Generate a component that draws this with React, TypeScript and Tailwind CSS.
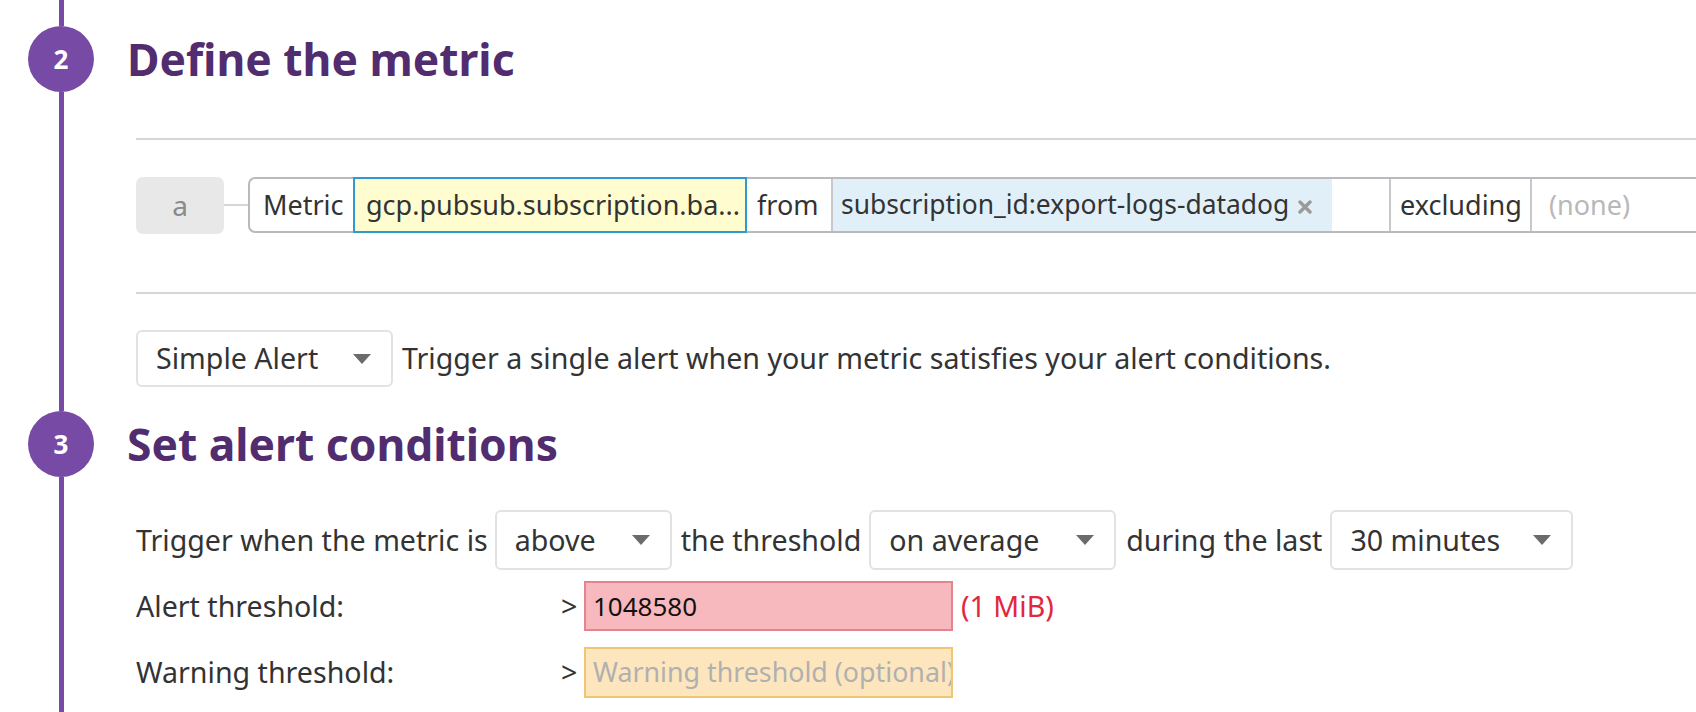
import React from "react";

const Caret = () => (
  <svg width="18" height="10" viewBox="0 0 18 10" className="shrink-0">
    <path d="M0 0 L18 0 L9 10 Z" fill="#6b6b6b" />
  </svg>
);

const Cross = () => (
  <svg width="14" height="14" viewBox="0 0 14 14" className="ml-[9px] mt-[4px] shrink-0">
    <path d="M2 2 L12 12 M12 2 L2 12" stroke="#9a9a9a" strokeWidth="3.4" strokeLinecap="round" />
  </svg>
);

function Select({ label, width }: { label: string; width: string }) {
  return (
    <div
      className={`flex h-full shrink-0 items-center justify-between rounded-[6px] border-2 border-[#e2e2e6] bg-white pl-[18px] pr-[20px] ${width}`}
    >
      <span>{label}</span>
      <Caret />
    </div>
  );
}

function Step({ n }: { n: string }) {
  return (
    <div className="flex h-[66px] w-[66px] shrink-0 items-center justify-center rounded-full bg-[#774aa5] text-[26px] font-bold text-white">
      {n}
    </div>
  );
}

export default function App() {
  return (
    <div
      className="flex h-[712px] w-[1696px] flex-col overflow-hidden bg-white text-[28.6px] text-[#333333]"
      style={{ fontFamily: '"Noto Sans", "Open Sans", sans-serif' }}
    >
      {/* Section 2 */}
      <div className="flex h-[411px] shrink-0">
        <div className="flex w-[122px] shrink-0 flex-col items-center">
          <div className="h-[26px] w-[5px] bg-[#774aa5]" />
          <Step n="2" />
          <div className="w-[5px] flex-1 bg-[#774aa5]" />
        </div>
        <div className="flex min-w-0 flex-1 flex-col pt-[26px]">
          <div className="flex h-[66px] items-center pl-[5px] text-[44.4px] font-bold text-[#512d6f]">
            Define the metric
          </div>
          <div className="ml-[14px] mt-[46px] h-[2px] bg-[#d6d6d6]" />
          <div className="ml-[14px] mt-[36px] flex h-[58px] items-center text-[27px]">
            <div className="flex h-[57px] w-[88px] shrink-0 items-center justify-center rounded-[7px] bg-[#e8e8e8] text-[28px] text-[#8a8a8a]">
              a
            </div>
            <div className="h-[2px] w-[24px] shrink-0 bg-[#d6d6d6]" />
            <div className="flex h-[56px] flex-1 items-stretch rounded-l-[7px] border-2 border-r-0 border-[#b9b9be] whitespace-nowrap">
              <div className="flex w-[103px] shrink-0 items-center pl-[13px]">Metric</div>
              <div className="-my-[2px] flex w-[394px] shrink-0 items-center border-2 border-[#2d9ad1] bg-[#fffdcf] pl-[11px]">
                gcp.pubsub.subscription.ba...
              </div>
              <div className="flex w-[86px] shrink-0 items-center border-r-2 border-[#c8c8cc] pl-[10px]">from</div>
              <div className="flex w-[556px] shrink-0 items-center">
                <div className="flex h-full w-[499px] items-center bg-[#e1f0f8] pl-[8px] text-[26.4px]">
                  subscription_id:export-logs-datadog
                  <Cross />
                </div>
              </div>
              <div className="flex w-[143px] shrink-0 items-center border-x-2 border-[#c8c8cc] pl-[9px]">excluding</div>
              <div className="flex flex-1 items-center pl-[17px] text-[#b8b8b8]">(none)</div>
            </div>
          </div>
          <div className="ml-[14px] mt-[58px] h-[2px] bg-[#d6d6d6]" />
          <div className="ml-[14px] mt-[36px] flex h-[57px] items-center gap-[9px] whitespace-nowrap">
            <Select label="Simple Alert" width="w-[257px]" />
            <span>Trigger a single alert when your metric satisfies your alert conditions.</span>
          </div>
        </div>
      </div>

      {/* Section 3 */}
      <div className="flex flex-1">
        <div className="flex w-[122px] shrink-0 flex-col items-center">
          <Step n="3" />
          <div className="w-[5px] flex-1 bg-[#774aa5]" />
        </div>
        <div className="flex min-w-0 flex-1 flex-col">
          <div className="flex h-[66px] items-center pl-[5px] text-[44.4px] font-bold text-[#512d6f]">
            Set alert conditions
          </div>
          <div className="ml-[14px] mt-[33px] flex h-[60px] items-center whitespace-nowrap">
            <span className="mr-[7px]">Trigger when the metric is</span>
            <Select label="above" width="w-[177px]" />
            <span className="ml-[9px] mr-[8px]">the threshold</span>
            <Select label="on average" width="w-[247px]" />
            <span className="ml-[10px] mr-[8px]">during the last</span>
            <Select label="30 minutes" width="w-[243px]" />
          </div>
          <div className="ml-[14px] mt-[11px] flex h-[50px] items-center">
            <span className="w-[425px] shrink-0">Alert threshold:</span>
            <span className="w-[23px] shrink-0">&gt;</span>
            <div className="flex h-full w-[369px] shrink-0 items-center border-2 border-[#e3848e] bg-[#f8b9be] pl-[7px] text-[26px] text-[#111111]">
              1048580
            </div>
            <span className="ml-[8px] text-[#e0283e]">(1 MiB)</span>
          </div>
          <div className="ml-[14px] mt-[16px] flex h-[51px] items-center">
            <span className="w-[425px] shrink-0">Warning threshold:</span>
            <span className="w-[23px] shrink-0">&gt;</span>
            <div className="flex h-full w-[369px] shrink-0 items-center overflow-hidden whitespace-nowrap border-2 border-[#f0c674] bg-[#fde6bd] pl-[7px] text-[26.8px] text-[#b0b0b0]">
              Warning threshold (optional)
            </div>
          </div>
        </div>
      </div>
    </div>
  );
}
